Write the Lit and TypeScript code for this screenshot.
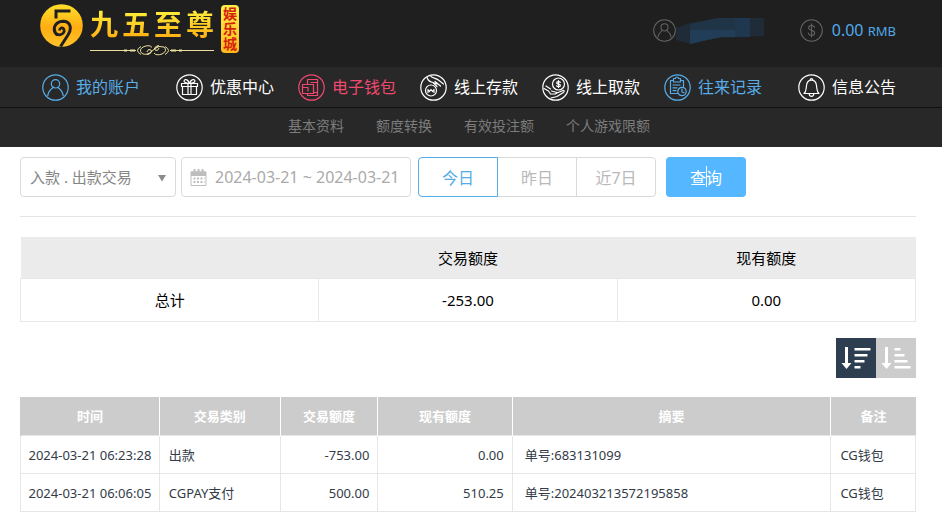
import { LitElement, html, svg, css, TemplateResult } from "lit";
import { customElement, property, state } from "lit/decorators.js";
import { classMap } from "lit/directives/class-map.js";

const icons: Record<string, TemplateResult> = {
  user: svg`<circle cx="13.5" cy="9.8" r="4.2"/><path d="M5.8 21.5c.4-4.5 3.3-6.6 5.4-8.2M21.2 21.5c-.4-4.5-3.3-6.6-5.4-8.2"/>`,
  gift: svg`<path d="M5.500 9.500h16v3h-16zM6.500 12.500v8h14v-8M12 9.500v11M15 9.500v11M13.500 9.500C10 9.400 7.400 8.200 8.200 6.400c1-2 4.300-.4 5.300 3.100M13.500 9.500c3.500-.1 6.100-1.300 5.300-3.100-1-2-4.300-.4-5.300 3.100"/>`,
  wallet: svg`<path d="M9.500 10V5.500h10v16h-10v-2M4.500 10.500h11v9h-11zM4.500 13.500H10v3.500M19.500 8.500H13M19.500 18.500h-4"/>`,
  deposit: svg`<circle cx="11" cy="16.500" r="5.500"/><path d="M8 18.500v-3l1.500 2 1.500-2 1.500 2 1.500-2v3M7 3.500c1 3 3 4.500 6 5l4 4M11 2.500c3 2 5.500 2 8 4l4.500 3.500M15 7.500l5.500 4.500M13 8.500l4 1.500"/>`,
  withdraw: svg`<circle cx="16.500" cy="10" r="6"/><path d="M18.300 8.300c-1-1.200-3.600-.8-3.600.6 0 1.700 3.700.9 3.700 2.500 0 1.400-2.700 1.600-3.800.4M16.500 6.500v7M2 14.500l4.500 2.500 2 3h5l1.500-1.500-5.500-1.500M4 12l4.500 3M15 19l6-2.500c1.500-.3 1.500 1.300.3 2L15 22.500l-6 1.500"/>`,
  records: svg`<path d="M14 19.500H6.500V6.500h3v-2h2a1.500 1.500 0 0 1 3 0h2v2h3v6M9.500 6.500v1.500h7V6.500M9 11h7M9 13.800h4M9 16.600h3"/><circle cx="18" cy="17.500" r="4.200"/><path d="M18 15v3l2 .8"/>`,
  bell: svg`<path d="M6 19.500c2.500-2 2-4.500 2.500-8 .4-3.200 2.200-5.300 5-5.300s4.600 2.100 5 5.300c.5 3.500 0 6 2.500 8zM11.200 19.500c0 3.700 4.600 3.700 4.600 0M12.300 6c0-2 2.400-2 2.400 0"/>`,
  dollar: svg`<path d="M17 10c-.4-3.300-6.800-3.300-6.800.2 0 4 7 2.200 7 6.200 0 3.700-6.900 3.700-7.400 0M13.600 5.500v15.500"/>`,
};

@customElement("ring-icon")
export class RingIcon extends LitElement {
  @property() name = "user";
  static styles = css`
    :host { display: block; flex: none; width: 27px; height: 27px; }
    .art { display: block; width: 100%; height: 100%; fill: none; stroke: currentColor; stroke-width: 1.2; stroke-linecap: round; stroke-linejoin: round; }
  `;
  render() {
    return html`<svg class="art" viewBox="0 0 27 27" aria-hidden="true">
      <circle cx="13.5" cy="13.5" r="12.7" />${icons[this.name]}
    </svg>`;
  }
}

@customElement("brand-logo")
export class BrandLogo extends LitElement {
  static styles = css`
    :host { display: block; }
    .logo { display: flex; align-items: flex-start; gap: 7px; color: inherit; text-decoration: none; }
    .mark { display: block; width: 43px; height: 43px; }
    .name { display: flex; gap: 4px; font-size: 28px; line-height: 40px; font-weight: 700; color: transparent; background: linear-gradient(#ffec3a 20%, #ffb414 80%); background-clip: text; -webkit-background-clip: text; }
    .flourish { display: block; width: 124px; height: 12px; fill: none; stroke: #eadf9c; }
    .seal { display: flex; flex-direction: column; align-items: center; justify-content: center; gap: 1px; box-sizing: border-box; width: 18px; height: 48px; margin-top: 1px; border-radius: 4px; background: linear-gradient(#fff04a, #ffb81e); color: #d3220c; font-size: 14px; line-height: 14px; font-weight: 700; }
  `;
  render() {
    return html`<a class="logo" href="#home">
      <svg class="mark" viewBox="0 0 43 43" aria-hidden="true">
        <defs><linearGradient id="gold" x1="0" y1="0" x2="0" y2="1"><stop offset="0" stop-color="#ffdf2a"/><stop offset=".55" stop-color="#ffad12"/><stop offset="1" stop-color="#ffc42a"/></linearGradient></defs>
        <circle cx="21.500" cy="21.500" r="21.300" fill="url(#gold)"/>
        <g fill="none" stroke="#1f1f1f" stroke-width="3">
          <path d="M30.500 7H16V14.500"/>
          <path d="M17.500 31C11.500 26 14.500 17.500 23 17.200C31 17.200 32 25 28 31L20.500 42.500"/>
          <path stroke-width="2.600" d="M16.500 30C21 32.500 25.500 28.500 23.800 25C22.500 22.800 19.500 24 19.500 26.500"/>
        </g>
      </svg>
      <span>
        <span class="name"><span>九</span><span>五</span><span>至</span><span>尊</span></span>
        <svg class="flourish" viewBox="0 0 124 12" aria-hidden="true">
          <path d="M0 6.500h46M80 6.500h44"/>
          <path stroke-width="2" d="M34 6.500h3M40 6.500h5M81 6.500h5M89 6.500h3"/>
          <path d="M51 2.500q-7 4 0 8M75 2.500q7 4 0 8M62 7q-5 5-10 2.500q-4-4 2-7q6-2 8 1M64 5q5-4 10-2q4 4-2 7q-6 2-8-1M57 8q1-4 4-2q2 3-4 4.500M69 4q-1 4-4 2q-2-3 4-4.500M58 10.500L68 2"/>
        </svg>
      </span>
      <span class="seal"><span>娱</span><span>乐</span><span>城</span></span>
    </a>`;
  }
}

interface Entry { icon: string; label: string; tone?: string }

@customElement("app-root")
export class AppRoot extends LitElement {
  @state() private range = "今日";
  @state() private order = "desc";

  static styles = css`
    :host { display: block; background: #fff; color: #000; font-family: "Noto Sans", "Noto Sans CJK SC", sans-serif; font-size: 15px; }
    a { color: inherit; text-decoration: none; }
    button, input, select { font-family: inherit; margin: 0; }
    button { cursor: pointer; }
    .top { display: flex; justify-content: space-between; height: 67px; box-sizing: border-box; padding: 4px 46px 0 40px; background: #1f1f1f; }
    .status { display: flex; align-items: flex-start; gap: 34px; padding-top: 14px; color: #646464; }
    .pair { display: flex; align-items: center; gap: 9px; height: 24px; }
    .pair.account { gap: 0; }
    .small { width: 23px; height: 23px; }
    .mask { display: block; width: 90px; height: 30px; }
    .balance { color: #4fa9ea; font-size: 16px; }
    .currency { font-size: 13px; }
    .nav { display: flex; align-items: center; justify-content: space-between; height: 40px; padding: 0 46px 0 42px; background: #282828; border-bottom: 1px solid #121212; color: #fff; font-size: 16px; }
    .middle { display: flex; gap: 24px; }
    .entry { display: flex; align-items: center; gap: 7px; line-height: 24px; white-space: nowrap; }
    .blue { color: #58ade9; }
    .pink { color: #f0486f; }
    .sub { display: flex; justify-content: center; gap: 32px; height: 39px; line-height: 36px; padding: 0 46px 0 42px; background: #282828; color: #7c7c7c; font-size: 14px; }
    .main { padding: 10px 26px 9px 20px; }
    .filters { display: flex; padding-bottom: 19px; border-bottom: 1px solid #e5e5e5; }
    .kind { position: relative; width: 156px; margin-right: 5px; }
    .select { appearance: none; width: 100%; height: 40px; box-sizing: border-box; padding: 0 9px; border: 1px solid #d9d9d9; border-radius: 4px; background: #fff; color: #858585; font-size: 15px; }
    .caret { position: absolute; right: 9px; top: 17px; width: 10px; height: 8px; fill: #8b8b8b; pointer-events: none; }
    .dates { display: flex; align-items: center; gap: 8px; width: 230px; height: 40px; box-sizing: border-box; padding: 0 6px 0 8px; margin-right: 7px; border: 1px solid #d9d9d9; border-radius: 4px; }
    .calendar { flex: none; width: 17px; height: 17px; fill: none; stroke: #bdbdbd; }
    .period { flex: 1; min-width: 0; padding: 0; border: 0; outline: 0; background: none; color: #aaa; font-size: 16px; }
    .ranges { display: flex; margin-right: 10px; }
    .range { width: 80px; height: 40px; border: 1px solid #d9d9d9; margin-left: -1px; background: #fff; color: #b9b9b9; font-size: 16px; padding: 0; }
    .range:first-child { margin-left: 0; border-radius: 4px 0 0 4px; }
    .range:last-child { border-radius: 0 4px 4px 0; }
    .range.on { position: relative; border-color: #54ade8; color: #54ade8; }
    .query { position: relative; width: 80px; height: 40px; border: 0; border-radius: 4px; background: #55b7ff; color: #fff; font-size: 16px; padding: 0; }
    .beam { position: absolute; left: 50%; top: 9px; width: 1px; height: 21px; background: #fff; }
    table { width: 100%; border-collapse: collapse; table-layout: fixed; }
    .totals { margin-top: 20px; line-height: 22px; text-align: center; }
    .totals th { height: 41px; padding: 0; font-weight: 400; background: #ebebeb; }
    .totals td { height: 42px; padding: 0; border: 1px solid #e8e8e8; }
    .order { display: flex; justify-content: flex-end; margin: 16px 0 19px; }
    .sort { width: 40px; height: 40px; padding: 0; border: 0; background: #ccc; }
    .sort.on { background: #2c3e50; }
    .bars { display: block; width: 40px; height: 40px; fill: #fff; }
    .log { color: #333b47; font-size: 13px; line-height: 20px; }
    .log th { height: 38px; padding: 0; color: #fff; background: #ccc; border-left: 1px solid #fff; font-weight: 700; }
    .log th:first-child { border-left-color: #ccc; }
    .log td { height: 37px; padding: 0 8px 0 9px; border: 1px solid #e6e6e6; white-space: nowrap; }
    .log .time { padding: 0; text-align: center; }
    .log .num { text-align: right; }
    .log .memo { padding-left: 12px; }
    .c1 { width: 15.4%; } .c2 { width: 13.4%; } .c3 { width: 10.8%; } .c4 { width: 14.9%; } .c6 { width: 9.4%; }
  `;

  private entry = ({ icon, label, tone = "" }: Entry) => html`
    <a class="entry ${tone}" href="#${icon}"><ring-icon name=${icon}></ring-icon>${label}</a>`;

  private sortButton(kind: string, label: string, widths: number[]) {
    return html`<button class=${classMap({ sort: true, on: this.order === kind })} aria-label=${label} @click=${() => (this.order = kind)}>
      <svg class="bars" viewBox="0 0 40 40" aria-hidden="true">
        <path d="M9 9h3v16h3.500L10.500 31L5.500 25H9z"/>
        ${widths.map((w, i) => svg`<rect x="18.500" y=${10 + i * 6} width=${w} height="2.600" rx=".5"/>`)}
      </svg></button>`;
  }

  render() {
    const middle: Entry[] = [
      { icon: "gift", label: "优惠中心" },
      { icon: "wallet", label: "电子钱包", tone: "pink" },
      { icon: "deposit", label: "线上存款" },
      { icon: "withdraw", label: "线上取款" },
      { icon: "records", label: "往来记录", tone: "blue" },
    ];
    const rows = [
      ["2024-03-21 06:23:28", "出款", "-753.00", "0.00", "单号:683131099", "CG钱包"],
      ["2024-03-21 06:06:05", "CGPAY支付", "500.00", "510.25", "单号:202403213572195858", "CG钱包"],
    ];
    return html`
      <header>
        <div class="top">
          <brand-logo></brand-logo>
          <div class="status">
            <div class="pair account">
              <ring-icon class="small" name="user"></ring-icon>
              <svg class="mask" viewBox="0 0 90 30" aria-hidden="true">
                <path d="M0 13L14 8L42 3H88V21L42 23L14 29L0 25z" fill="#1f2b36"/>
                <path d="M14 9L42 3H74V22H46L14 29z" fill="#203447"/>
                <path d="M14 15H30V25L14 29zM30 15H59V22H45L30 25z" fill="#213d57"/>
                <path d="M59 3H74V22H59z" fill="#20384f"/>
              </svg>
            </div>
            <div class="pair"><ring-icon class="small" name="dollar"></ring-icon>
              <span class="balance">0.00 <span class="currency">RMB</span></span></div>
          </div>
        </div>
        <nav class="nav">
          ${this.entry({ icon: "user", label: "我的账户", tone: "blue" })}
          <div class="middle">${middle.map(this.entry)}</div>
          ${this.entry({ icon: "bell", label: "信息公告" })}
        </nav>
        <nav class="sub">
          ${["基本资料", "额度转换", "有效投注额", "个人游戏限额"].map((t) => html`<a href="#sub">${t}</a>`)}
        </nav>
      </header>
      <main class="main">
        <div class="filters">
          <div class="kind">
            <select class="select" aria-label="交易类别"><option>入款 . 出款交易</option></select>
            <svg class="caret" viewBox="0 0 10 8" aria-hidden="true"><path d="M1 1h8L5 7.500z"/></svg>
          </div>
          <label class="dates">
            <svg class="calendar" viewBox="0 0 17 17" aria-hidden="true">
              <path d="M1 3h15v13.500H1zM1 6.500h15" /><path stroke-width="4" d="M1 4.500h15"/>
              <path stroke-width="2" d="M4.500 0v4M8.500 0v3M12.500 0v4"/>
              <path stroke-width="2" stroke-dasharray="2 1.500" d="M3.500 9.500h11M3.500 13h11"/>
            </svg>
            <input class="period" type="text" aria-label="时间" .value=${"2024-03-21 ~ 2024-03-21"} />
          </label>
          <div class="ranges">
            ${["今日", "昨日", "近7日"].map((t) => html`<button class=${classMap({ range: true, on: this.range === t })} @click=${() => (this.range = t)}>${t}</button>`)}
          </div>
          <button class="query">查询<span class="beam"></span></button>
        </div>
        <table class="totals">
          <thead><tr><th></th><th>交易额度</th><th>现有额度</th></tr></thead>
          <tbody><tr><td>总计</td><td>-253.00</td><td>0.00</td></tr></tbody>
        </table>
        <div class="order">
          ${this.sortButton("desc", "降序", [16, 13, 10, 6])}
          ${this.sortButton("asc", "升序", [6, 10, 13, 16])}
        </div>
        <table class="log">
          <thead><tr>
            <th class="c1">时间</th><th class="c2">交易类别</th><th class="c3">交易额度</th><th class="c4">现有额度</th><th>摘要</th><th class="c6">备注</th>
          </tr></thead>
          <tbody>${rows.map((r) => html`<tr>
            <td class="time">${r[0]}</td><td>${r[1]}</td><td class="num">${r[2]}</td><td class="num">${r[3]}</td><td class="memo">${r[4]}</td><td>${r[5]}</td>
          </tr>`)}</tbody>
        </table>
      </main>`;
  }
}
